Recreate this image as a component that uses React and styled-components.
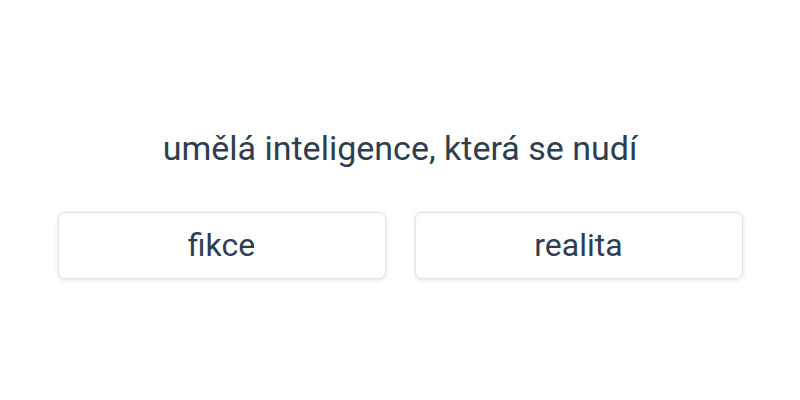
import React from "react";
import styled, { createGlobalStyle } from "styled-components";

const GlobalStyle = createGlobalStyle`
  body {
    margin: 0;
    font-family: Roboto, "Liberation Sans", sans-serif;
    color: #2c3e50;
    background: #fff;
  }
`;

const Page = styled.div`
  height: 100vh;
  box-sizing: border-box;
  padding-top: 6px;
  display: flex;
  flex-direction: column;
  align-items: center;
  justify-content: center;
`;

const Question = styled.h1`
  margin: 0 0 44px;
  font-size: 34px;
  line-height: 40px;
  font-weight: 400;
  text-align: center;
`;

const Choices = styled.div`
  display: grid;
  grid-template-columns: 328px 328px;
  gap: 29px;
`;

const Choice = styled.button`
  height: 67px;
  border: 1px solid #e2e2e2;
  border-radius: 7px;
  background: #fff;
  box-shadow: 0 1px 4px rgba(0, 0, 0, 0.12);
  font-family: inherit;
  font-size: 32px;
  color: #2c3e50;
  cursor: pointer;
`;

export default function App() {
  return (
    <>
      <GlobalStyle />
      <Page>
        <Question>umělá inteligence, která se nudí</Question>
        <Choices>
          <Choice>fikce</Choice>
          <Choice>realita</Choice>
        </Choices>
      </Page>
    </>
  );
}
